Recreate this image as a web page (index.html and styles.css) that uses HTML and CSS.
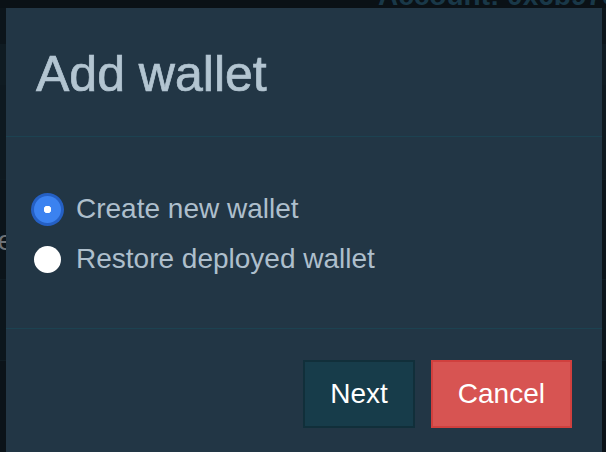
FILE: index.html
```html
<!DOCTYPE html>
<html lang="en">
<head>
    <meta charset="UTF-8">
    <title>Add wallet</title>
    <link rel="stylesheet" href="styles.css">
</head>
<body>
    <div class="page">
        <div class="topbar">
            <span class="account">Account: 0x6b97c3a1</span>
        </div>
        <div class="bg-row row-a"></div>
        <div class="bg-row row-b"></div>
        <div class="bg-row row-c"></div>
        <div class="bg-row row-d"><span class="bg-label">Balance</span></div>
        <div class="bg-row row-e"></div>
        <div class="bg-row row-f"></div>
    </div>

    <div class="modal">
        <div class="modal-header">
            <h4 class="modal-title">Add wallet</h4>
        </div>
        <div class="modal-body">
            <label class="option">
                <input type="radio" name="mode" value="create" checked>
                <span>Create new wallet</span>
            </label>
            <label class="option">
                <input type="radio" name="mode" value="restore">
                <span>Restore deployed wallet</span>
            </label>
        </div>
        <div class="modal-footer">
            <button class="btn btn-next">Next</button>
            <button class="btn btn-cancel">Cancel</button>
        </div>
    </div>
</body>
</html>
```

FILE: styles.css
```css
html, body {
    margin: 0;
    padding: 0;
    width: 100%;
    height: 100%;
    overflow: hidden;
}
body {
    font-family: "Liberation Sans", Arial, sans-serif;
    background-color: #0b1319;
    position: relative;
}
.page {
    display: flex;
    flex-direction: column;
}
.topbar {
    height: 8px;
    padding-left: 378px;
    background-color: #0a1116;
    white-space: nowrap;
}
.account {
    display: block;
    margin-top: -20px;
    font-size: 28px;
    line-height: 32px;
    font-weight: bold;
    color: #193848;
}
.bg-row {
    border-bottom: 1px solid #0f1b22;
}
.row-a { height: 36px; background-color: #0c151b; }
.row-b { height: 39px; background-color: #0f1b22; }
.row-c { height: 94px; background-color: #0e1920; }
.row-d {
    height: 100px;
    background-color: #0b141a;
    padding-top: 47px;
    box-sizing: border-box;
}
.bg-label {
    display: inline-block;
    margin-left: -88px;
    font-size: 28px;
    line-height: 28px;
    color: #6e7378;
}
.row-e { height: 80px; background-color: #0c161c; }
.row-f { height: 100px; background-color: #0b1319; }

.modal {
    position: absolute;
    top: 8px;
    left: 6px;
    width: 596px;
    background-color: #223645;
}
.modal-header {
    padding: 39px 30px 34px;
    border-bottom: 1px solid #1c4251;
}
.modal-title {
    margin: 0;
    font-size: 50px;
    line-height: 55px;
    font-weight: normal;
    -webkit-text-stroke: 0.7px #b3c5d1;
    color: #b3c5d1;
}
.modal-body {
    padding: 47px 0 44px 28px;
    display: flex;
    flex-direction: column;
}
.option {
    display: flex;
    align-items: center;
    height: 50px;
    font-size: 28px;
    color: #aebfcc;
}
.option input {
    appearance: none;
    -webkit-appearance: none;
    width: 27px;
    height: 27px;
    margin: 0 15px 0 0;
    border-radius: 50%;
    background-color: #ffffff;
    flex-shrink: 0;
}
.option input:checked {
    background-color: #3b82f0;
    box-shadow: 0 0 0 3px #2560c4;
    background-image: radial-gradient(circle, #ffffff 0, #ffffff 3.5px, transparent 4px);
}
.modal-footer {
    display: flex;
    justify-content: flex-end;
    gap: 16px;
    padding: 31px 30px;
    border-top: 1px solid #1c4251;
}
.btn {
    font-family: "Liberation Sans", Arial, sans-serif;
    font-size: 28px;
    line-height: 40px;
    padding: 12px 25px;
    border: 2px solid;
    color: #ffffff;
    border-radius: 0;
}
.btn-next {
    background-color: #173c4a;
    border-color: #112f3a;
}
.btn-cancel {
    background-color: #d75452;
    border-color: #d0403e;
}
```
